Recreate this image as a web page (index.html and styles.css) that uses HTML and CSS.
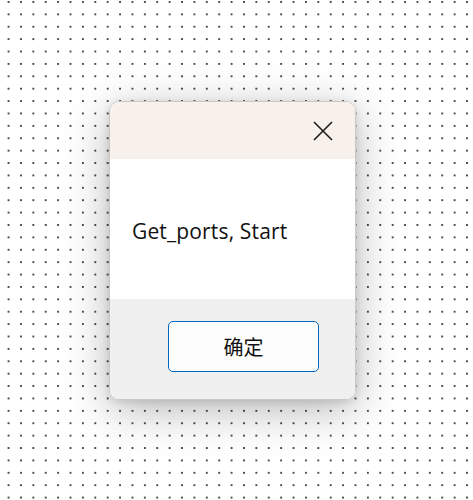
FILE: index.html
```html
<!DOCTYPE html>
<html>
<head>
<meta charset="utf-8">
<link rel="stylesheet" href="styles.css">
</head>
<body>
<div class="page">
  <div class="dialog">
    <div class="titlebar">
      <button class="close" aria-label="Close">
        <svg width="20" height="20" viewBox="0 0 20 20"><path d="M1 1 L19 19 M19 1 L1 19" stroke="#1b1b1b" stroke-width="1.6" fill="none"/></svg>
      </button>
    </div>
    <div class="content">
      <p class="message">Get_ports, Start</p>
    </div>
    <div class="footer">
      <button class="ok">确定</button>
    </div>
  </div>
</div>
</body>
</html>
```
FILE: styles.css
```css
html, body {
  margin: 0;
  padding: 0;
}
body {
  width: 473px;
  height: 500px;
  overflow: hidden;
  background-color: #ffffff;
  background-image: radial-gradient(circle at 1px 1px, #4a4a4a 0.8px, transparent 1.2px);
  background-size: 12.4px 12.4px;
  background-position: 7.6px 1px;
}
.page {
  padding: 101px 0 0 109px;
}
.dialog {
  box-sizing: border-box;
  width: 247px;
  height: 299px;
  border: 1px solid #c9c9c9;
  border-radius: 10px;
  overflow: hidden;
  display: flex;
  flex-direction: column;
  box-shadow: 0 10px 45px rgba(0, 0, 0, 0.28), 0 2px 8px rgba(0, 0, 0, 0.12);
  font-family: "Open Sans", "Noto Sans CJK SC", sans-serif;
}
.titlebar {
  height: 57px;
  background: #f7f0eb;
  display: flex;
  justify-content: flex-end;
  align-items: center;
  padding-right: 22px;
}
.close {
  border: none;
  background: transparent;
  padding: 0;
  width: 20px;
  height: 20px;
  display: flex;
  margin-top: 1px;
}
.content {
  height: 140px;
  background: #ffffff;
  display: flex;
  align-items: center;
  padding-left: 22px;
}
.message {
  margin: 3px 0 0 0;
  font-family: "Open Sans", sans-serif;
  font-size: 21px;
  color: #111111;
  letter-spacing: 0.15px;
}
.footer {
  flex: 1;
  background: #f0f0f0;
  padding: 22px 0 0 58px;
}
.ok {
  box-sizing: border-box;
  width: 151px;
  height: 51px;
  border: 1.5px solid #0067c0;
  border-radius: 5px;
  background: #fdfdfd;
  font-family: "Noto Sans CJK SC", sans-serif;
  font-size: 20px;
  color: #111111;
  padding: 0;
}
```
